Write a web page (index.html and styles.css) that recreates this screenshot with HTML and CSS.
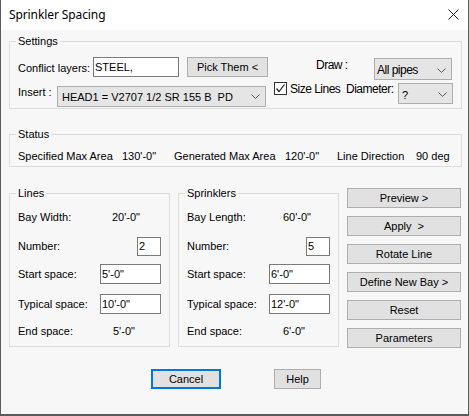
FILE: index.html
```html
<!DOCTYPE html>
<html lang="en">
<head>
    <meta charset="UTF-8">
    <title>Sprinkler Spacing</title>
    <link rel="stylesheet" href="styles.css">
</head>
<body>
    <div class="window">
        <div class="titlebar">
            <span class="title">Sprinkler Spacing</span>
            <svg class="close" width="11" height="11" viewBox="0 0 11 11">
                <path d="M0.5 0.5 L10.5 10.5 M10.5 0.5 L0.5 10.5" stroke="#1a1a1a" stroke-width="1" fill="none"/>
            </svg>
        </div>
        <div class="client">
            <fieldset class="group settings">
                <legend>Settings</legend>
                <div class="row row-conflict">
                    <span class="lbl conflict-lbl">Conflict layers:</span>
                    <input class="edit conflict-edit" type="text" value="STEEL,">
                    <div class="btn pick-btn">Pick Them &lt;</div>
                    <span class="lbl narrow draw-lbl">Draw :</span>
                    <div class="combo draw-combo">
                        <span class="narrow">All pipes</span>
                        <svg class="chev" width="9" height="5" viewBox="0 0 9 5"><path d="M0.5 0.5 L4.5 4.5 L8.5 0.5" stroke="#555" fill="none"/></svg>
                    </div>
                </div>
                <div class="row row-insert">
                    <span class="lbl insert-lbl">Insert :</span>
                    <div class="combo insert-combo">
                        <span class="pre">HEAD1 = V2707 1/2 SR 155 B  PD</span>
                        <svg class="chev" width="9" height="5" viewBox="0 0 9 5"><path d="M0.5 0.5 L4.5 4.5 L8.5 0.5" stroke="#555" fill="none"/></svg>
                    </div>
                    <div class="check">
                        <svg width="11" height="11" viewBox="0 0 11 11"><path d="M1.5 5.5 L4 8.5 L9.5 1.5" stroke="#222" stroke-width="1.2" fill="none"/></svg>
                    </div>
                    <span class="lbl narrow size-lbl">Size Lines</span>
                    <span class="lbl narrow dia-lbl">Diameter:</span>
                    <div class="combo dia-combo">
                        <span>?</span>
                        <svg class="chev" width="9" height="5" viewBox="0 0 9 5"><path d="M0.5 0.5 L4.5 4.5 L8.5 0.5" stroke="#555" fill="none"/></svg>
                    </div>
                </div>
            </fieldset>

            <fieldset class="group status">
                <legend>Status</legend>
                <div class="status-row">
                    <span class="s1">Specified Max Area</span>
                    <span class="s2">130'-0"</span>
                    <span class="s3">Generated Max Area</span>
                    <span class="s4">120'-0"</span>
                    <span class="s5">Line Direction</span>
                    <span>90 deg</span>
                </div>
            </fieldset>

            <div class="panels">
                <fieldset class="group bay">
                    <legend>Lines</legend>
                    <div class="field f-bay"><span class="fl w94">Bay Width:</span><span>20'-0"</span></div>
                    <div class="field f-num"><span>Number:</span><input class="edit num" type="text" value="2"></div>
                    <div class="field f-start"><span>Start space:</span><input class="edit len" type="text" value="5'-0&quot;"></div>
                    <div class="field f-typ"><span>Typical space:</span><input class="edit len" type="text" value="10'-0&quot;"></div>
                    <div class="field f-end"><span class="fl w95">End space:</span><span>5'-0"</span></div>
                </fieldset>
                <fieldset class="group bay">
                    <legend>Sprinklers</legend>
                    <div class="field f-bay"><span class="fl w96">Bay Length:</span><span>60'-0"</span></div>
                    <div class="field f-num"><span>Number:</span><input class="edit num" type="text" value="5"></div>
                    <div class="field f-start"><span>Start space:</span><input class="edit len" type="text" value="6'-0&quot;"></div>
                    <div class="field f-typ"><span>Typical space:</span><input class="edit len" type="text" value="12'-0&quot;"></div>
                    <div class="field f-end"><span class="fl w96">End space:</span><span>6'-0"</span></div>
                </fieldset>
                <div class="actions">
                    <div class="btn">Preview &gt;</div>
                    <div class="btn">Apply &nbsp;&gt;</div>
                    <div class="btn">Rotate Line</div>
                    <div class="btn">Define New Bay &gt;</div>
                    <div class="btn">Reset</div>
                    <div class="btn">Parameters</div>
                </div>
            </div>

            <div class="footer">
                <div class="btn default cancel-btn">Cancel</div>
                <div class="btn help-btn">Help</div>
            </div>
        </div>
    </div>
</body>
</html>
```

FILE: styles.css
```css
html, body { margin: 0; padding: 0; background: #6b6b6b; }
*, *::before, *::after { box-sizing: border-box; }
body { font-family: "Liberation Sans", Arial, sans-serif; font-size: 11px; color: #000; }

.window { width: 469px; height: 416px; background: #f7f7f7; border: 1px solid #5c5c5c; border-top: none; border-bottom-width: 2px; }
.titlebar { height: 30px; background: #fff; display: flex; align-items: center; justify-content: space-between; padding: 0 9px 0 8px; }
.title { font-family: "Noto Sans", "Open Sans", sans-serif; font-size: 12px; letter-spacing: -0.1px; margin-top: -1px; }
.close { margin-top: -2px; }

.client { padding: 5px 6px 0 8px; }

.group { margin: 0; min-width: 0; border: 1px solid #dcdcdc; padding: 0 8px; }
.group legend { padding: 0 2px; margin-left: -2px; line-height: 13px; font-size: 11px; }

.lbl { line-height: 13px; white-space: nowrap; }
.narrow { font-size: 12px; letter-spacing: -0.5px; }
.pre { white-space: pre; }

/* settings */
.settings { padding-bottom: 1px; }
.row { display: flex; align-items: flex-start; }
.row-conflict { margin-top: 9px; height: 23px; }
.row-insert { margin-top: 2px; height: 25px; }
.conflict-lbl { width: 75px; margin-top: 5px; }
.conflict-edit { width: 86px; height: 20px; margin-top: 2px; }
.pick-btn { width: 81px; height: 20px; margin-left: 8px; }
.draw-lbl { width: 58px; margin-left: 48px; margin-top: 2px; }
.draw-combo { width: 78px; height: 22px; margin-top: 1px; padding-left: 2px; padding-top: 2px; }
.insert-lbl { width: 39px; margin-top: 4px; }
.insert-combo { width: 209px; height: 21px; margin-top: 4px; padding-left: 4px; }
.check { width: 13px; height: 13px; margin-left: 8px; background: #fff; border: 1px solid #333; display: flex; align-items: center; justify-content: center; }
.size-lbl { width: 56px; margin-left: 3px; margin-top: 1px; }
.dia-lbl { width: 52px; margin-top: 1px; }
.dia-combo { width: 55px; height: 21px; margin-top: 1px; padding-left: 3px; padding-top: 2px; }

.edit { font: inherit; color: #000; background: #fff; border: 1px solid #7a7a7a; padding: 0 1px; margin: 0; outline: none; }
.combo { display: flex; align-items: center; justify-content: space-between; background: #e5e5e5; border: 1px solid #adadad; padding-right: 5px; }
.btn { display: flex; align-items: center; justify-content: center; background: #e1e1e1; border: 1px solid #adadad; white-space: nowrap; }

/* status */
.status { margin-top: 19px; padding-bottom: 3px; }
.status-row { display: flex; margin-top: 9px; line-height: 13px; white-space: nowrap; }
.s1 { width: 104px; }
.s2 { width: 52px; }
.s3 { width: 111px; }
.s4 { width: 52px; }
.s5 { width: 79px; }

/* lines / sprinklers */
.panels { display: flex; align-items: flex-start; margin-top: 20px; }
.bay { width: 161px; padding-bottom: 5px; margin-right: 8px; }
.field { display: flex; align-items: center; justify-content: space-between; height: 20px; white-space: nowrap; }
.f-bay { margin-top: 7px; justify-content: flex-start; }
.f-num { margin-top: 9px; }
.f-start { margin-top: 8px; }
.f-typ { margin-top: 10px; }
.f-end { margin-top: 7px; justify-content: flex-start; }
.w94 { width: 94px; }
.w95 { width: 95px; }
.w96 { width: 96px; }
.num { width: 24px; height: 19px; }
.len { width: 61px; height: 20px; }

.actions { width: 114px; margin-top: 1px; display: flex; flex-direction: column; gap: 8px; }
.actions .btn { height: 20px; }

/* footer */
.footer { display: flex; margin-top: 21px; }
.footer .btn { height: 20px; }
.cancel-btn { width: 70px; margin-left: 142px; }
.help-btn { width: 47px; margin-left: 53px; }
.btn.default { border: 2px solid #0078d7; }
```
